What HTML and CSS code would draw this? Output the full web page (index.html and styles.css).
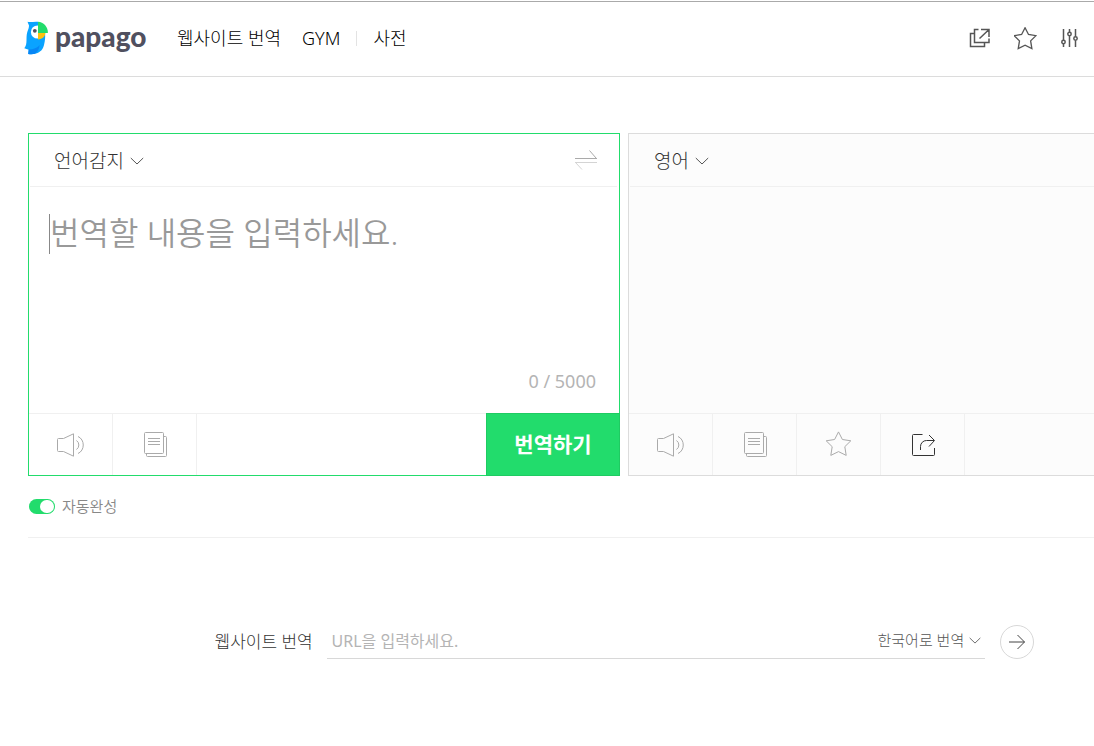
FILE: index.html
```html
<!DOCTYPE html>
<html lang="ko">
<head>
<meta charset="utf-8">
<meta name="viewport" content="width=device-width, initial-scale=1">
<title>papago</title>
<link rel="stylesheet" href="styles.css">
</head>
<body>
<svg class="sprite" aria-hidden="true">
  <symbol id="speaker" viewBox="0 0 28 24"><path d="M1.500 5.500h5L16.500.8v22.400L6.500 18.500h-5a1 1 0 0 1-1-1v-11a1 1 0 0 1 1-1zM19.500 7.500a5.500 5.500 0 0 1 0 9M21 3.500c7 3 7 14 0 17"/></symbol>
  <symbol id="copy" viewBox="0 0 24 26"><path d="M2.500.5h17a1 1 0 0 1 1 1v19a1 1 0 0 1-1 1h-17a1 1 0 0 1-1-1v-19a1 1 0 0 1 1-1zM5 6.500h12M5 9.500h12M5 12.500h12M21 4.500h1.500a1 1 0 0 1 1 1v18a1 1 0 0 1-1 1h-18a1 1 0 0 1-1-1V22"/></symbol>
  <symbol id="star" viewBox="0 0 26 26"><path d="M12.500 .9l3.900 7.600 8.400 1.300-6 5.900 1.400 8.700-7.700-3.800-7.700 3.800 1.400-8.700-6-5.900 8.400-1.300z"/></symbol>
  <symbol id="chevron" viewBox="0 0 14 8"><path d="M.8 1L7 7l6.200-6"/></symbol>
</svg>

<header class="header">
  <a class="logo" href="#">
    <svg class="logo-bird" viewBox="0 0 24 34" aria-hidden="true">
      <path fill="#0aa3ff" d="M3.500.8C7 1.600 10 .3 14 .8V12h7C21.500 16 21 20 20 24 19 28.500 16.500 31 12 32.500c-2.600.9-5.500.9-7.800.5l.5-4.200L.3 27.300C4 23 1.500 17 3.300 11 4.400 8 5 6.500 5 4.500z"/>
      <path fill="#0786f5" d="M4.700 28.600c5-.2 8.500-1.600 11-4.600-.6 4-2 7-4.700 8.800-2 .6-4.500.6-6.800.2z"/>
      <circle cx="13.500" cy="11" r="6.600" fill="#fff"/>
      <path fill="#22dc6c" d="M14 .8c5.500.3 9.900 4.700 9.900 11.200H14z"/>
      <path fill="#ffc20e" d="M14 12h7.500c-.5 3.500-3 6-7.500 6.500z"/>
      <circle cx="10.800" cy="9.800" r="1.900" fill="#50505f"/>
    </svg>
    <span class="logo-text">papago</span>
  </a>
  <nav class="nav">
    <a href="#">웹사이트 번역</a>
    <a href="#">GYM</a>
    <a class="nav-split" href="#">사전</a>
  </nav>
  <div class="tools">
    <button class="tool" type="button" aria-label="새 창">
      <svg width="22" height="20" viewBox="0 0 22 20"><path d="M5 5.500H1.500v13h14V15M9.500 1.500h-4v13h14.500v-4M12 1.500h8V9M19.500 2L10.500 10.500"/></svg>
    </button>
    <button class="tool" type="button" aria-label="즐겨찾기">
      <svg width="23" height="23"><use href="#star"/></svg>
    </button>
    <button class="tool" type="button" aria-label="설정">
      <svg width="18" height="18" viewBox="0 0 18 18"><path d="M3.500 0v11M3.500 15v3M9.500 0v3M9.500 7v11M15.500 0v7.500M15.500 11.500V18"/><circle cx="3.500" cy="13" r="1.700"/><circle cx="9.500" cy="5" r="1.700"/><circle cx="15.500" cy="9.500" r="1.700"/></svg>
    </button>
  </div>
</header>

<main class="main">
  <div class="panels">
    <section class="panel panel-source">
      <div class="panel-head">
        <span class="dropdown"><select aria-label="출발 언어"><option>언어감지</option></select><svg class="chevron" width="14" height="8"><use href="#chevron"/></svg></span>
        <button class="swap" type="button" aria-label="언어 바꾸기">
          <svg width="24" height="20" viewBox="0 0 24 20"><path stroke="#aaa" d="M15.500.5l6.500 7.500M1 8.500h22"/><path stroke="#d4d4d4" d="M1 12.500h22M1.500 12.500l6.500 7"/></svg>
        </button>
      </div>
      <div class="panel-body">
        <div class="entry">
          <span class="caret"></span>
          <textarea aria-label="번역할 내용" placeholder="번역할 내용을 입력하세요."></textarea>
        </div>
        <p class="count">0 / 5000</p>
      </div>
      <div class="panel-foot">
        <button class="action" type="button" aria-label="듣기"><svg width="28" height="24"><use href="#speaker"/></svg></button>
        <button class="action" type="button" aria-label="복사"><svg width="24" height="26"><use href="#copy"/></svg></button>
        <button class="translate" type="button">번역하기</button>
      </div>
    </section>
    <section class="panel panel-target">
      <div class="panel-head">
        <span class="dropdown"><select aria-label="도착 언어"><option>영어</option></select><svg class="chevron" width="14" height="8"><use href="#chevron"/></svg></span>
      </div>
      <div class="panel-body"></div>
      <div class="panel-foot">
        <button class="action" type="button" aria-label="듣기"><svg width="28" height="24"><use href="#speaker"/></svg></button>
        <button class="action" type="button" aria-label="복사"><svg width="24" height="26"><use href="#copy"/></svg></button>
        <button class="action" type="button" aria-label="즐겨찾기"><svg width="26" height="28" viewBox="0 0 26 28"><use href="#star" width="26" height="26"/></svg></button>
        <button class="action action-dark" type="button" aria-label="공유"><svg width="24" height="24" viewBox="0 0 24 24"><path d="M11.500 1.500h-9a1 1 0 0 0-1 1v19a1 1 0 0 0 1 1h20a1 1 0 0 0 1-1V15M9.500 17v-3.500a6 6 0 0 1 6-6h7.500M18 2l5.500 5.500L18 13.500"/></svg></button>
      </div>
    </section>
  </div>

  <div class="option-row">
    <input class="toggle" id="auto" type="checkbox" checked>
    <label for="auto">자동완성</label>
  </div>

  <form class="site">
    <label class="site-label" for="url">웹사이트 번역</label>
    <div class="site-field">
      <input id="url" type="text" placeholder="URL을 입력하세요.">
      <span class="dropdown dropdown-small"><select aria-label="번역 언어"><option>한국어로 번역</option></select><svg class="chevron" width="12" height="7"><use href="#chevron"/></svg></span>
    </div>
    <button class="go" type="button" aria-label="이동"><svg width="18" height="16" viewBox="0 0 18 16"><path d="M1 8h15.500M9.500 1l7 7-7 7"/></svg></button>
  </form>
</main>
</body>
</html>
```
FILE: styles.css
```css
* {
  box-sizing: border-box;
}

body {
  margin: 0;
  padding-top: 1px;
  overflow-x: hidden;
  background: #fff;
  color: #333;
  font-family: "Noto Sans", "Noto Sans CJK KR", sans-serif;
  font-weight: 300;
}

button,
input,
select,
textarea {
  margin: 0;
  padding: 0;
  border: 0;
  outline: 0;
  border-radius: 0;
  background: none;
  color: inherit;
  font: inherit;
}

svg {
  display: block;
  flex: none;
  fill: none;
  stroke: currentColor;
}

a {
  color: inherit;
  text-decoration: none;
}

.sprite {
  position: absolute;
  width: 0;
  height: 0;
}

.header {
  display: flex;
  align-items: center;
  height: 76px;
  padding: 0 16px 2px 24px;
  border-top: 1px solid #aaa;
  border-bottom: 1px solid #dcdcdc;
}

.logo {
  display: flex;
  align-items: center;
  gap: 7px;
  width: 153px;
}

.logo-bird {
  width: 24px;
  height: 34px;
  stroke: none;
}

.logo-text {
  padding-bottom: 4px;
  color: #50505f;
  font-family: Lato, sans-serif;
  font-size: 28px;
  font-weight: 900;
  line-height: 32px;
}

.nav {
  display: flex;
  gap: 21px;
  color: #000;
  font-size: 18px;
  line-height: 24px;
}

.nav-split {
  display: flex;
  align-items: center;
  gap: 16px;
  margin-left: -5px;
}

.nav-split::before {
  width: 1px;
  height: 15px;
  background: #e3e3e3;
  content: "";
}

.tools {
  display: flex;
  align-items: center;
  gap: 23px;
  margin-left: auto;
  color: #555;
}

.tool {
  stroke-width: 1.5;
}

.main {
  min-width: 1248px;
  padding: 56px 28px 0;
}

.panels {
  display: grid;
  grid-template-columns: 1fr 1fr;
  gap: 8px;
}

.panel {
  display: flex;
  flex-direction: column;
  border: 1px solid #dcdcdc;
}

.panel-source {
  border-color: #22dc6c;
}

.panel-target {
  background: #fcfcfc;
}

.panel-head {
  display: flex;
  align-items: center;
  justify-content: space-between;
  height: 53px;
  margin: 0 2px 0 1px;
  padding: 0 19px 0 24px;
  border-bottom: 1px solid #f0f0f0;
}

.dropdown {
  display: flex;
  align-items: center;
  gap: 6px;
  padding-top: 2px;
  font-size: 19px;
}

.dropdown select {
  appearance: none;
}

.chevron {
  color: #555;
}

.dropdown-small {
  gap: 4px;
  padding: 0 0 2px;
  color: #555;
  font-size: 15px;
}

.panel-body {
  display: flex;
  flex: 1;
  flex-direction: column;
  min-height: 226px;
  padding: 24px 20px 20px;
}

.entry {
  display: flex;
  flex: 1;
}

.caret {
  width: 1px;
  height: 40px;
  margin-top: 3px;
  background: #888;
}

textarea {
  flex: 1;
  resize: none;
  font-size: 32px;
  font-weight: 350;
  line-height: 44px;
}

::placeholder {
  color: #999;
  opacity: 1;
}

.count {
  margin: 0;
  padding-right: 3px;
  color: #b4b4b4;
  font-size: 18px;
  font-weight: 400;
  line-height: 24px;
  text-align: right;
}

.panel-foot {
  display: flex;
  height: 62px;
  border-top: 1px solid #f0f0f0;
}

.action {
  display: grid;
  place-items: center;
  width: 84px;
  border-right: 1px solid #f0f0f0;
  color: #aaa;
}

.action-dark {
  color: #333;
}

.translate {
  width: 134px;
  margin: -1px -1px -1px auto;
  padding-bottom: 4px;
  border: 1px solid #1fcb62;
  background: #22dc6c;
  color: #fff;
  font-size: 21px;
  font-weight: 700;
}

.option-row {
  display: flex;
  align-items: center;
  gap: 7px;
  height: 62px;
  padding-left: 1px;
  border-bottom: 1px solid #f0f0f0;
  color: #888;
  font-size: 15px;
}

.option-row label {
  padding-bottom: 2px;
  font-weight: 350;
}

.toggle {
  display: flex;
  justify-content: flex-end;
  width: 26px;
  height: 15px;
  padding: 0 1px;
  border-radius: 8px;
  background: #22dc6c;
  appearance: none;
}

.toggle::before {
  width: 14px;
  height: 13px;
  margin: 1px 0;
  border-radius: 7px;
  background: #fff;
  content: "";
}

.site {
  display: flex;
  align-items: center;
  justify-content: center;
  padding-top: 86px;
}

.site-label {
  width: 112px;
  padding-bottom: 2px;
  font-size: 17px;
}

.site-field {
  display: flex;
  align-items: center;
  width: 658px;
  height: 35px;
  margin-right: 15px;
  padding: 0 4px 0 5px;
  border-bottom: 1px solid #d8d8d8;
}

.site-field input {
  flex: 1;
  min-width: 0;
  font-size: 16px;
  font-weight: 400;
}

.site-field ::placeholder {
  color: #b4b4b4;
}

.go {
  display: grid;
  place-items: center;
  width: 34px;
  height: 34px;
  border: 1px solid #d8d8d8;
  border-radius: 50%;
  color: #444;
}
```
